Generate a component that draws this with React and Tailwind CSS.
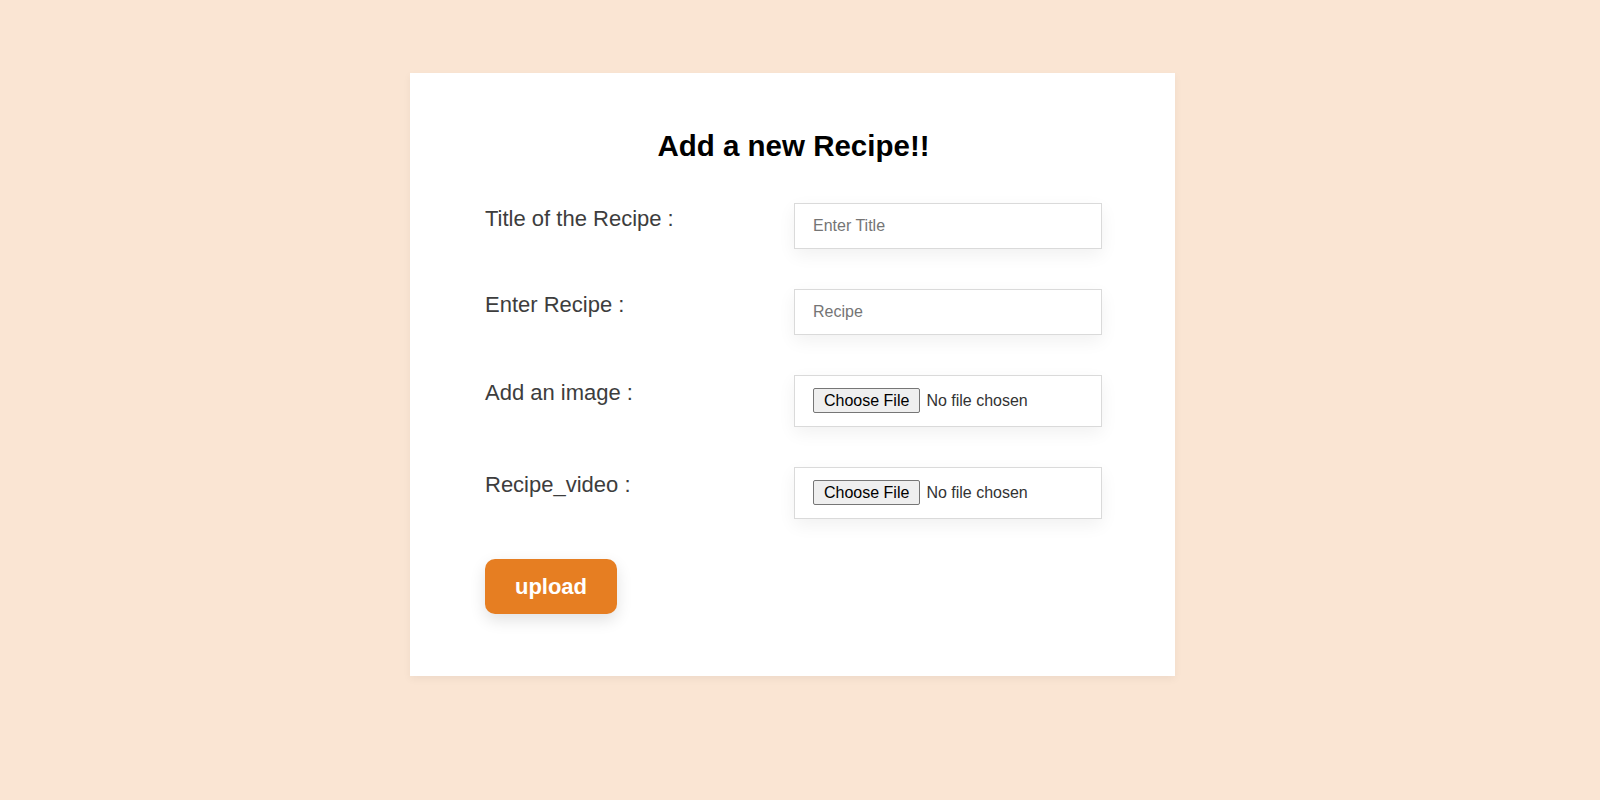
import { useState } from "react";

const fieldClassName =
  "w-[308px] h-[46px] border border-[#dadada] bg-white px-[18px] text-[16px] text-[#333] outline-none shadow-[0_6px_18px_rgba(0,0,0,0.06)] placeholder:text-[#757575]";

const fileClassName =
  "w-[308px] h-[52px] border border-[#dadada] bg-white px-[18px] py-[12px] text-[16px] leading-[19px] text-[#333] shadow-[0_6px_18px_rgba(0,0,0,0.06)] file:mr-[6px] file:border file:border-[#767676] file:bg-[#efefef] file:rounded-[2px] file:px-[10px] file:py-[2px] file:text-[16px] file:leading-[19px] file:text-black";

const labelClassName = "w-[309px] text-[22px] leading-[25px] text-[#3d3d3d]";

const App = () => {
  const [title, setTitle] = useState("");
  const [recipe, setRecipe] = useState("");

  return (
    <div
      className="min-h-screen bg-[#fae5d3] pt-[73px] pr-[15px] flex justify-center items-start"
      style={{ fontFamily: '"Liberation Sans", Arial, sans-serif' }}
    >
      <form
        className="w-[765px] bg-white pt-[57px] pb-[62px] pl-[75px] pr-[73px] shadow-[0_3px_8px_rgba(0,0,0,0.05)]"
        onSubmit={(e) => e.preventDefault()}
      >
        <h2 className="text-center text-[29.5px] leading-[32px] font-bold text-black">Add a new Recipe!!</h2>

        <div className="mt-[41px] flex flex-col gap-10">
          <div className="flex items-start">
            <label className={`${labelClassName} mt-[3px]`}>Title of the Recipe :</label>
            <input
              type="text"
              placeholder="Enter Title"
              value={title}
              onChange={(e) => setTitle(e.target.value)}
              className={fieldClassName}
            />
          </div>

          <div className="flex items-start">
            <label className={`${labelClassName} mt-[3px]`}>Enter Recipe :</label>
            <input
              type="text"
              placeholder="Recipe"
              value={recipe}
              onChange={(e) => setRecipe(e.target.value)}
              className={fieldClassName}
            />
          </div>

          <div className="flex items-start">
            <label className={`${labelClassName} mt-[5px]`}>Add an image :</label>
            <input type="file" accept="image/*" className={fileClassName} />
          </div>

          <div className="flex items-start">
            <label className={`${labelClassName} mt-[5px]`}>Recipe_video :</label>
            <input type="file" accept="video/*" className={fileClassName} />
          </div>

          <div>
            <button
              type="submit"
              className="w-[132px] h-[55px] rounded-[10px] bg-[#e67e22] text-[22px] font-bold text-white shadow-[0_6px_16px_rgba(0,0,0,0.12)]"
            >
              upload
            </button>
          </div>
        </div>
      </form>
    </div>
  );
};

export default App;
